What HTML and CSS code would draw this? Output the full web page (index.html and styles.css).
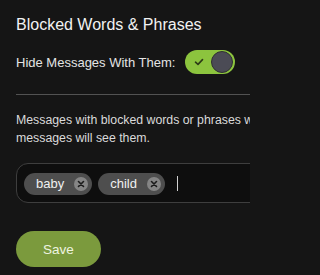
FILE: index.html
```html
<!DOCTYPE html>
<html>
<head>
<meta charset="utf-8">
<link rel="stylesheet" href="styles.css">
</head>
<body>
<div class="panel">
  <h2 class="title">Blocked Words &amp; Phrases</h2>
  <div class="row">
    <span class="row-label">Hide Messages With Them:</span>
    <div class="toggle">
      <svg class="check" width="10" height="8" viewBox="0 0 10 8"><path d="M1.5 4.2 L4 6.4 L8.5 1.6" fill="none" stroke="#2d3b17" stroke-width="1.6" stroke-linecap="round" stroke-linejoin="round"/></svg>
      <span class="knob"></span>
    </div>
  </div>
  <div class="divider"></div>
  <p class="desc">Messages with blocked words or phrases will be hidden. Only people who show hidden messages will see them.</p>
  <div class="tag-input">
    <span class="chip"><span class="chip-text">baby</span><span class="chip-x"><svg width="8" height="8" viewBox="0 0 8 8"><path d="M1.5 1.5 L6.5 6.5 M6.5 1.5 L1.5 6.5" stroke="#1b1b1b" stroke-width="1.6" stroke-linecap="round"/></svg></span></span>
    <span class="chip"><span class="chip-text">child</span><span class="chip-x"><svg width="8" height="8" viewBox="0 0 8 8"><path d="M1.5 1.5 L6.5 6.5 M6.5 1.5 L1.5 6.5" stroke="#1b1b1b" stroke-width="1.6" stroke-linecap="round"/></svg></span></span>
    <span class="caret"></span>
  </div>
  <button class="save">Save</button>
</div>
</body>
</html>
```
FILE: styles.css
```css
html, body {
  margin: 0;
  padding: 0;
  background: #151515;
  overflow: hidden;
}
body {
  font-family: "Liberation Sans", Arial, sans-serif;
  width: 250px;
  height: 275px;
}
.panel {
  width: 560px;
  padding: 16px 0 0 16px;
  display: flex;
  flex-direction: column;
  align-items: flex-start;
}
.title {
  margin: 0;
  font-size: 16px;
  font-weight: normal;
  line-height: 18px;
  color: #f2f2f2;
}
.row {
  margin-top: 16px;
  display: flex;
  align-items: center;
  height: 24px;
}
.row-label {
  font-size: 13px;
  color: #e4e4e4;
}
.toggle {
  margin-left: 10px;
  width: 50px;
  height: 24px;
  border-radius: 12px;
  background: #8cc43e;
  display: flex;
  align-items: center;
  justify-content: space-between;
  box-sizing: border-box;
  padding: 0 2px 0 9px;
}
.check {
  display: block;
}
.knob {
  width: 20px;
  height: 20px;
  border-radius: 50%;
  background: #4b4b55;
  border: 1px solid #2f2f33;
}
.divider {
  margin-top: 20px;
  align-self: stretch;
  height: 1px;
  background: #525252;
}
.desc {
  margin: 17px 0 0;
  width: 500px;
  font-size: 12.3px;
  line-height: 17.6px;
  color: #dadada;
}
.tag-input {
  margin-top: 16px;
  align-self: stretch;
  height: 40px;
  box-sizing: border-box;
  border: 1px solid #3e3e3e;
  border-radius: 12px;
  background: #0e0e0e;
  display: flex;
  align-items: center;
  padding: 1px 7px 0;
  gap: 6px;
}
.chip {
  display: flex;
  align-items: center;
  height: 22px;
  border-radius: 11px;
  background: #4e4e4e;
  padding: 0 4px 0 12px;
}
.chip-text {
  font-size: 13px;
  color: #f0f0f0;
}
.chip-x {
  margin-left: 10px;
  width: 14px;
  height: 14px;
  border-radius: 50%;
  background: #858585;
  display: flex;
  align-items: center;
  justify-content: center;
}
.chip-x svg {
  display: block;
}
.caret {
  margin-left: 6px;
  width: 1px;
  height: 15px;
  background: #d0d0d0;
}
.save {
  margin-top: 28px;
  width: 85px;
  height: 36px;
  border: none;
  border-radius: 18px;
  background: #7b9a3d;
  color: #eef4e0;
  font-family: "Liberation Sans", Arial, sans-serif;
  font-size: 13.5px;
  padding: 0;
}
```
